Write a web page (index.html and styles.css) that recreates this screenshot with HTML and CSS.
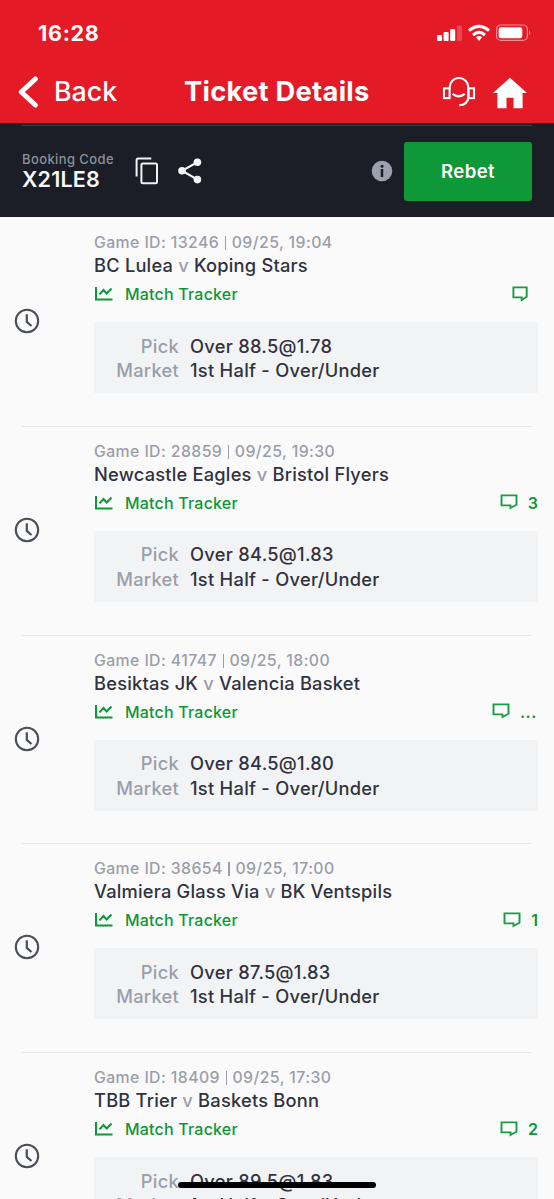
FILE: index.html
```html
<!DOCTYPE html>
<html lang="en">
<head>
<meta charset="utf-8">
<title>Ticket Details</title>
<link rel="stylesheet" href="styles.css">
</head>
<body>
<svg class="defs" width="0" height="0">
  <symbol id="clock" viewBox="0 0 26 26"><g fill="none" stroke="#4b4e57" stroke-width="2.1"><circle cx="13" cy="13" r="11.2"/><path d="M12.8 6.3v7.6l4.7 4.1" stroke-width="2.2"/></g></symbol>
  <symbol id="chart" viewBox="0 0 19 14"><g fill="none" stroke="#0d9737" stroke-width="2"><path d="M2 0v12.4H18.5"/><path d="M5.5 7.4l4-4.4 3.2 3.5 4.8-5"/></g></symbol>
  <symbol id="chat" viewBox="0 0 18 16"><path d="M1.5 1.4h15v9.4l-6 3.2v-2.6h-9z" fill="none" stroke="#1d9a44" stroke-width="1.9"/></symbol>
  <symbol id="chat-small" viewBox="0 0 16 16"><path d="M1.4 1.4h13.3v9.4l-5 3.2v-2.6H1.4z" fill="none" stroke="#1d9a44" stroke-width="1.9"/></symbol>
</svg>
<header class="top">
  <div class="status">
    <span class="time">16:28</span>
    <svg class="system" width="96" height="20" viewBox="0 0 96 20">
      <g fill="#fff"><rect x="0" y="11" width="5" height="6" rx="1"/><rect x="6.6" y="8" width="5" height="9" rx="1"/><rect x="13.2" y="5" width="5" height="12" rx="1"/><rect x="20" y="1.5" width="5" height="15.5" rx="1" opacity=".2"/></g>
      <g fill="none" stroke="#fff" stroke-width="3"><path d="M32 6.6q10-8.4 20 0"/><path d="M36 11q6-5.2 12 0"/></g><path d="M38.9 13.2q3.1-2.4 6.2 0L42 16.9z" fill="#fff"/>
      <rect x="59.6" y="1" width="30.8" height="15.4" rx="4.3" fill="none" stroke="#fff" stroke-opacity=".5" stroke-width="1.2"/><rect x="61.7" y="3.2" width="23.6" height="11" rx="2.3" fill="#fff"/><path d="M92 6.4q2.6 2.3 0 4.6z" fill="#fff" opacity=".55"/>
    </svg>
  </div>
  <nav class="nav">
    <svg width="22" height="36" viewBox="0 0 22 36"><path d="M19.3 5L5.3 18l14 13" fill="none" stroke="#fff" stroke-width="5" stroke-linecap="round" stroke-linejoin="round"/></svg>
    <span class="back">Back</span>
    <h1 class="title">Ticket Details</h1>
    <svg class="support" width="34" height="32" viewBox="0 0 34 32"><g fill="none" stroke="#fff" stroke-width="2.1"><rect x="2" y="11.3" width="5.6" height="9.8"/><rect x="26.4" y="11.3" width="5.6" height="9.8"/><path d="M7.6 12V10.4a9.4 9.4 0 0 1 18.8 0V20.3q-.9 7.7-9.2 7.9"/><path d="M10.7 16.8q6.1 4.9 12 0" stroke-width="2.2"/></g></svg>
    <svg class="home" width="36" height="32" viewBox="0 0 36 32"><path d="M18 .7L35 16.1h-4.4v15.2h-9.1V20.8h-7v10.5H5.4V16.1H1z" fill="#fff"/></svg>
  </nav>
</header>
<section class="booking">
  <div class="code"><span class="code-label">Booking Code</span><strong class="code-value">X21LE8</strong></div>
  <svg class="copy" width="24" height="28" viewBox="0 0 24 28"><g fill="none" stroke="#f1f2f6" stroke-width="2"><path d="M1.6 19.6V3.2q0-1.6 1.6-1.6h13.1"/><rect x="6.4" y="6.4" width="15.6" height="19.8" rx="1.5"/></g></svg>
  <svg class="share" width="24" height="26" viewBox="0 0 24 26"><path d="M19.5 4.1L4 12.8l15.5 8.8" fill="none" stroke="#f7f8fb" stroke-width="2.2"/><g fill="#f7f8fb"><circle cx="19.4" cy="4.2" r="3.8"/><circle cx="4" cy="12.8" r="3.8"/><circle cx="19.4" cy="21.6" r="3.8"/></g></svg>
  <svg class="info" width="22" height="22" viewBox="0 0 22 22"><circle cx="11" cy="11" r="10.3" fill="#9ca0ad"/><circle cx="11" cy="6.2" r="1.5" fill="#1b1e26"/><path d="M11 9v8" stroke="#1b1e26" stroke-width="2.5"/></svg>
  <button class="rebet">Rebet</button>
</section>
<main class="games">
  <article class="game">
    <svg class="clock"><use href="#clock"/></svg>
    <div class="body">
      <p class="meta">Game ID: 13246 <i class="bar"></i> 09/25, 19:04</p>
      <h2 class="teams">BC Lulea <span class="v">v</span> Koping Stars</h2>
      <div class="links"><svg class="chart"><use href="#chart"/></svg><span class="tracker">Match Tracker</span><svg class="chat chat-alone"><use href="#chat-small"/></svg></div>
      <dl class="bet"><dt>Pick</dt><dd>Over 88.5@1.78</dd><dt>Market</dt><dd>1st Half - Over/Under</dd></dl>
    </div>
  </article>
  <article class="game">
    <svg class="clock"><use href="#clock"/></svg>
    <div class="body">
      <p class="meta">Game ID: 28859 <i class="bar"></i> 09/25, 19:30</p>
      <h2 class="teams">Newcastle Eagles <span class="v">v</span> Bristol Flyers</h2>
      <div class="links"><svg class="chart"><use href="#chart"/></svg><span class="tracker">Match Tracker</span><svg class="chat"><use href="#chat"/></svg><span class="count">3</span></div>
      <dl class="bet"><dt>Pick</dt><dd>Over 84.5@1.83</dd><dt>Market</dt><dd>1st Half - Over/Under</dd></dl>
    </div>
  </article>
  <article class="game">
    <svg class="clock"><use href="#clock"/></svg>
    <div class="body">
      <p class="meta">Game ID: 41747 <i class="bar"></i> 09/25, 18:00</p>
      <h2 class="teams">Besiktas JK <span class="v">v</span> Valencia Basket</h2>
      <div class="links"><svg class="chart"><use href="#chart"/></svg><span class="tracker">Match Tracker</span><svg class="chat"><use href="#chat"/></svg><span class="count more">...</span></div>
      <dl class="bet"><dt>Pick</dt><dd>Over 84.5@1.80</dd><dt>Market</dt><dd>1st Half - Over/Under</dd></dl>
    </div>
  </article>
  <article class="game">
    <svg class="clock"><use href="#clock"/></svg>
    <div class="body">
      <p class="meta">Game ID: 38654 <i class="bar"></i> 09/25, 17:00</p>
      <h2 class="teams">Valmiera Glass Via <span class="v">v</span> BK Ventspils</h2>
      <div class="links"><svg class="chart"><use href="#chart"/></svg><span class="tracker">Match Tracker</span><svg class="chat"><use href="#chat"/></svg><span class="count">1</span></div>
      <dl class="bet"><dt>Pick</dt><dd>Over 87.5@1.83</dd><dt>Market</dt><dd>1st Half - Over/Under</dd></dl>
    </div>
  </article>
  <article class="game">
    <svg class="clock"><use href="#clock"/></svg>
    <div class="body">
      <p class="meta">Game ID: 18409 <i class="bar"></i> 09/25, 17:30</p>
      <h2 class="teams">TBB Trier <span class="v">v</span> Baskets Bonn</h2>
      <div class="links"><svg class="chart"><use href="#chart"/></svg><span class="tracker">Match Tracker</span><svg class="chat"><use href="#chat"/></svg><span class="count">2</span></div>
      <dl class="bet"><dt>Pick</dt><dd>Over 89.5@1.83</dd><dt>Market</dt><dd>1st Half - Over/Under</dd></dl>
    </div>
  </article>
</main>
<div class="home-indicator"></div>
</body>
</html>
```
FILE: styles.css
```css
* { box-sizing: border-box; margin: 0; padding: 0; }
body { width: 554px; height: 1199px; overflow: hidden; display: flex; flex-direction: column; position: relative; background: #fafafb; font-family: Inter, "Liberation Sans", sans-serif; }
svg { display: block; flex: none; }
.defs { position: absolute; }
.top { height: 123px; flex: none; background: #e51a27; color: #fff; }
.status { height: 60px; padding: 24px 18px 0 38px; display: flex; justify-content: space-between; }
.time { font-size: 21.5px; line-height: 18px; font-weight: 700; letter-spacing: 0.7px; }
.system { margin-right: 3px; }
.nav { height: 63px; padding: 0 26px 0 16px; display: flex; align-items: center; }
.back { width: 131px; padding: 0 0 1px 16px; font-size: 26.8px; line-height: 31px; font-weight: 450; letter-spacing: 0; }
.title { flex: 1; margin-left: 15px; font-size: 27.3px; line-height: 32px; font-weight: 700; letter-spacing: 0.28px; white-space: nowrap; }
.support { margin: 3px 16px 0 0; }
.home { margin-top: 2px; }
.booking { height: 93.5px; flex: none; padding: 2px 22px 0; display: flex; align-items: center; background: linear-gradient(#35424a, #35424a) 22px 2px / 510px 1px no-repeat #1b1e26; }
.code { width: 112px; display: flex; flex-direction: column; padding-bottom: 2px; white-space: nowrap; }
.code-label { font-size: 13px; line-height: 19px; font-weight: 500; letter-spacing: 0.4px; color: #8d919d; }
.code-value { font-size: 21.5px; line-height: 20px; font-weight: 600; letter-spacing: 0.15px; color: #f7f8fb; }
.copy { margin-left: 1px; }
.share { margin-left: 19px; }
.info { margin-left: auto; margin-right: 11px; }
.rebet { width: 128px; height: 59px; margin-top: 1px; border: 0; border-radius: 3px; background: #0f9838; color: #fff; font: 600 18.6px/22px Inter, sans-serif; letter-spacing: 0.4px; }
.games { flex: 1; min-height: 0; overflow: hidden; display: flex; flex-direction: column; padding-top: 1.5px; }
.game { flex: none; height: 208.75px; padding: 14px 16px 0 14px; display: flex; background: linear-gradient(#e6e7e9, #e6e7e9) 22px 100% / 510px 1px no-repeat; }
.clock { width: 26px; height: 26px; margin: 76px 54px 0 0; }
.body { width: 444px; flex: none; }
.meta { font-size: 15.8px; line-height: 22px; font-weight: 500; letter-spacing: 0.42px; color: #9b9ea9; white-space: nowrap; }
.bar { display: inline-block; width: 1.3px; height: 14px; margin: 0 1px; background: #9b9ea9; vertical-align: -2px; }
.teams { margin-bottom: 2px; font-size: 18.3px; line-height: 22px; font-weight: 550; letter-spacing: 0.2px; color: #30333e; white-space: nowrap; }
.v { color: #9b9ea9; }
.links { height: 32px; display: flex; align-items: center; font-size: 16px; line-height: 22px; color: #0d9737; }
.chart { width: 19px; height: 14px; }
.tracker { margin-left: 12px; margin-right: auto; font-weight: 550; letter-spacing: 0.2px; }
.chat { width: 18px; height: 16px; margin: 0 10px 1px 0; }
.chat-alone { width: 16px; }
.count { font-weight: 600; }
.more { letter-spacing: 0.6px; margin-right: 1px; }
.bet { height: 71px; margin-top: 12px; padding-top: 11.5px; display: grid; grid-template-columns: 85px 1fr; column-gap: 11px; grid-auto-rows: 24.7px; font-size: 18.3px; line-height: 24.7px; font-weight: 540; letter-spacing: 0.27px; background: #f2f3f5; white-space: nowrap; }
.bet dt { text-align: right; color: #9b9ea9; }
.bet dd { color: #30333e; }
.home-indicator { position: absolute; left: 178px; top: 1182px; width: 198px; height: 6px; border-radius: 3px; background: #000; }
```
